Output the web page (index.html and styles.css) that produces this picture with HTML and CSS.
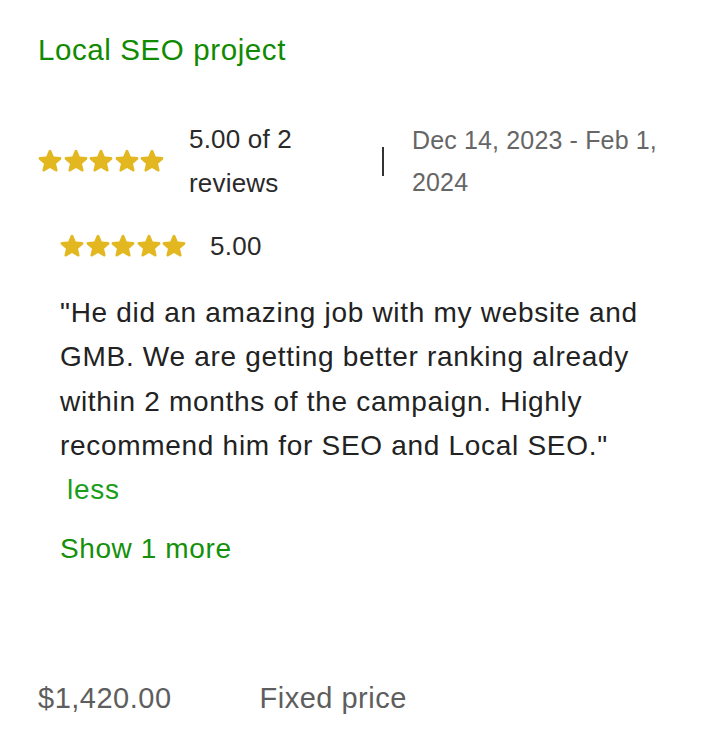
FILE: index.html
```html
<!DOCTYPE html>
<html lang="en">
<head>
<meta charset="utf-8">
<title>Local SEO project</title>
<link rel="stylesheet" href="styles.css">
</head>
<body>
<main class="job">
  <h2 class="job-title">Local SEO project</h2>

  <div class="stats">
    <div class="stars">
      <svg viewBox="3 3 18 18"><path d="M12 17.27l4.15 2.51c.76.46 1.69-.22 1.49-1.08l-1.1-4.72 3.67-3.18c.67-.58.31-1.68-.57-1.75l-4.83-.41-1.89-4.46c-.34-.81-1.5-.81-1.84 0L9.19 8.630l-4.83.41c-.88.07-1.24 1.17-.57 1.75l3.67 3.18-1.1 4.72c-.2.86.73 1.54 1.49 1.08l4.15-2.5z"/></svg>
      <svg viewBox="3 3 18 18"><path d="M12 17.27l4.15 2.51c.76.46 1.69-.22 1.49-1.08l-1.1-4.72 3.67-3.18c.67-.58.31-1.68-.57-1.75l-4.83-.41-1.89-4.46c-.34-.81-1.5-.81-1.84 0L9.19 8.63l-4.83.41c-.88.07-1.24 1.17-.57 1.75l3.67 3.18-1.1 4.72c-.2.86.73 1.54 1.49 1.08l4.15-2.5z"/></svg>
      <svg viewBox="3 3 18 18"><path d="M12 17.27l4.15 2.51c.76.46 1.69-.22 1.49-1.08l-1.1-4.72 3.67-3.18c.67-.58.31-1.68-.57-1.75l-4.83-.41-1.89-4.46c-.34-.81-1.5-.81-1.84 0L9.19 8.63l-4.83.41c-.88.07-1.24 1.17-.57 1.75l3.67 3.18-1.1 4.72c-.2.86.73 1.54 1.49 1.08l4.15-2.5z"/></svg>
      <svg viewBox="3 3 18 18"><path d="M12 17.27l4.15 2.51c.76.46 1.69-.22 1.49-1.08l-1.1-4.72 3.67-3.18c.67-.58.31-1.68-.57-1.75l-4.83-.41-1.89-4.46c-.34-.81-1.5-.81-1.84 0L9.19 8.63l-4.83.41c-.88.07-1.24 1.17-.57 1.75l3.67 3.18-1.1 4.72c-.2.86.73 1.54 1.49 1.08l4.15-2.5z"/></svg>
      <svg viewBox="3 3 18 18"><path d="M12 17.27l4.15 2.51c.76.46 1.69-.22 1.49-1.08l-1.1-4.72 3.67-3.18c.67-.58.31-1.68-.57-1.75l-4.83-.41-1.89-4.46c-.34-.81-1.5-.81-1.84 0L9.19 8.63l-4.83.41c-.88.07-1.24 1.17-.57 1.75l3.67 3.18-1.1 4.72c-.2.86.73 1.54 1.49 1.08l4.15-2.5z"/></svg>
    </div>
    <div class="stats-text">5.00 of 2 reviews</div>
    <div class="divider"></div>
    <div class="dates">Dec 14, 2023 - Feb 1, 2024</div>
  </div>

  <section class="review">
    <div class="review-rating">
      <div class="stars">
        <svg viewBox="3 3 18 18"><path d="M12 17.27l4.15 2.51c.76.46 1.69-.22 1.49-1.08l-1.1-4.72 3.67-3.18c.67-.58.31-1.68-.57-1.75l-4.83-.41-1.89-4.46c-.34-.81-1.5-.81-1.84 0L9.19 8.63l-4.83.41c-.88.07-1.24 1.17-.57 1.75l3.67 3.18-1.1 4.72c-.2.86.73 1.54 1.49 1.08l4.15-2.5z"/></svg>
        <svg viewBox="3 3 18 18"><path d="M12 17.27l4.15 2.51c.76.46 1.69-.22 1.49-1.08l-1.1-4.72 3.67-3.18c.67-.58.31-1.68-.57-1.75l-4.83-.41-1.89-4.46c-.34-.81-1.5-.81-1.84 0L9.19 8.63l-4.83.41c-.88.07-1.24 1.17-.57 1.75l3.67 3.18-1.1 4.72c-.2.86.73 1.54 1.49 1.08l4.15-2.5z"/></svg>
        <svg viewBox="3 3 18 18"><path d="M12 17.27l4.15 2.51c.76.46 1.69-.22 1.49-1.08l-1.1-4.72 3.67-3.18c.67-.58.31-1.68-.57-1.75l-4.83-.41-1.89-4.46c-.34-.81-1.5-.81-1.84 0L9.19 8.63l-4.83.41c-.88.07-1.24 1.17-.57 1.75l3.67 3.18-1.1 4.72c-.2.86.73 1.54 1.49 1.08l4.15-2.5z"/></svg>
        <svg viewBox="3 3 18 18"><path d="M12 17.27l4.15 2.51c.76.46 1.69-.22 1.49-1.08l-1.1-4.72 3.67-3.18c.67-.58.31-1.68-.57-1.75l-4.83-.41-1.89-4.46c-.34-.81-1.5-.81-1.84 0L9.19 8.63l-4.83.41c-.88.07-1.24 1.17-.57 1.75l3.67 3.18-1.1 4.72c-.2.86.73 1.54 1.49 1.08l4.15-2.5z"/></svg>
        <svg viewBox="3 3 18 18"><path d="M12 17.27l4.15 2.51c.76.46 1.69-.22 1.49-1.08l-1.1-4.72 3.67-3.18c.67-.58.31-1.68-.57-1.75l-4.83-.41-1.89-4.46c-.34-.81-1.5-.81-1.84 0L9.19 8.63l-4.83.41c-.88.07-1.24 1.17-.57 1.75l3.67 3.18-1.1 4.72c-.2.86.73 1.54 1.49 1.08l4.15-2.5z"/></svg>
      </div>
      <span class="review-score">5.00</span>
    </div>
    <p class="quote">"He did an amazing job with my website and GMB. We are getting better ranking already within 2 months of the campaign. Highly recommend him for SEO and Local SEO."</p>
    <a class="link less" href="#">less</a>
    <a class="link show-more" href="#">Show 1 more</a>
  </section>

  <div class="price-row">
    <span class="price">$1,420.00</span>
    <span class="price-type">Fixed price</span>
  </div>
</main>
</body>
</html>
```

FILE: styles.css
```css
* { box-sizing: border-box; }

html, body {
  margin: 0;
  padding: 0;
  background: #ffffff;
}

body {
  font-family: "Liberation Sans", Arial, sans-serif;
  font-size: 28px;
  letter-spacing: 0.7px;
  color: #222222;
}

.job {
  padding: 30px 38px 0 38px;
}

.job-title {
  margin: 0;
  font-size: 29.5px;
  font-weight: 400;
  line-height: 40px;
  color: #108a00;
  letter-spacing: 0.6px;
}

.stats {
  margin-top: 47px;
  display: flex;
  align-items: center;
}

.stars {
  display: flex;
  gap: 1.5px;
  fill: #e2b720;
}

.stars svg {
  width: 24px;
  height: 24px;
  display: block;
}

.stats-text {
  width: 193px;
  padding-right: 20px;
  margin-left: 25px;
  line-height: 44px;
  color: #2a2a2a;
  font-size: 26px;
  letter-spacing: 0.2px;
}

.divider {
  width: 2px;
  height: 29px;
  background: #333333;
  margin: 0 28px 0 0;
}

.dates {
  flex: 1;
  line-height: 42px;
  color: #666666;
  font-size: 25px;
  letter-spacing: 0.15px;
}

.review {
  padding-left: 22px;
  margin-top: 21px;
}

.review-rating {
  display: flex;
  align-items: center;
  height: 40px;
}

.review-score {
  margin-left: 24px;
  font-size: 26px;
  letter-spacing: 0.3px;
  color: #2a2a2a;
}

.quote {
  margin: 25px 0 0 0;
  line-height: 44.3px;
  color: #222222;
}

.link {
  display: block;
  color: #1a9e1a;
  text-decoration: none;
  line-height: 44px;
}

.less {
  padding-left: 7px;
}

.show-more {
  margin-top: 15px;
  color: #14900a;
  letter-spacing: 0.6px;
}

.price-row {
  margin-top: 105px;
  display: flex;
  gap: 88px;
  line-height: 44px;
  font-size: 29px;
  letter-spacing: 0.5px;
  color: #5e5e5e;
}
```
